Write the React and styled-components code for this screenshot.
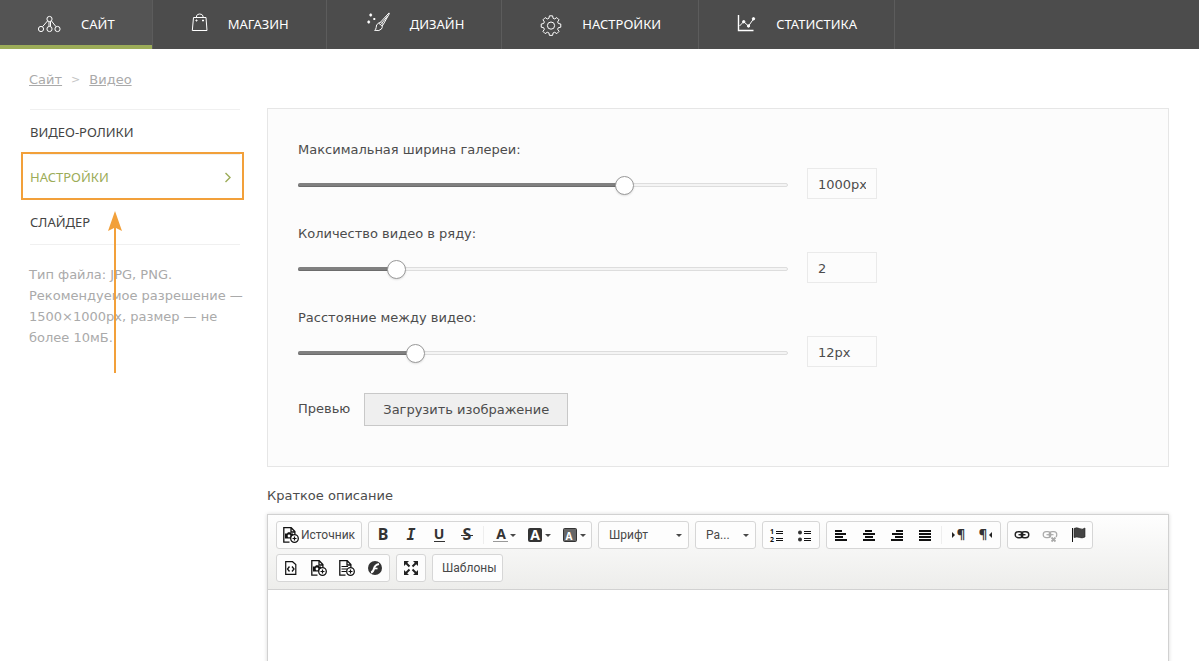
import React, { useState } from 'react'
import styled, { createGlobalStyle } from 'styled-components'

const theme = {
  navFont: "'Noto Sans', 'Open Sans', sans-serif",
  bodyFont: "'DejaVu Sans', Verdana, sans-serif",
  editorFont: "Roboto, 'Liberation Sans', sans-serif",
  green: '#9cac58',
  orange: '#f2a03a',
  text: '#4c4c4c',
  muted: '#aaaaaa',
}

const GlobalStyle = createGlobalStyle`
  * {
    box-sizing: border-box;
  }
  body {
    margin: 0;
    background: #fff;
    color: ${theme.text};
    font: 13px/20px ${theme.bodyFont};
  }
  input, button, select, textarea {
    font: inherit;
    color: inherit;
    margin: 0;
  }
  svg {
    overflow: visible;
  }
`

// outline of a gear with eight teeth around cx, cy
const gearPath = (cx, cy, inner, outer) => {
  const steps = [
    [-0.28, inner],
    [-0.16, outer],
    [0.16, outer],
    [0.28, inner],
  ]
  const points = []
  for (let i = 0; i < 8; i++) {
    steps.forEach(([offset, r]) => {
      const a = (i * Math.PI) / 4 + offset
      const x = cx + r * Math.sin(a)
      const y = cy - r * Math.cos(a)
      points.push(`${x.toFixed(2)} ${y.toFixed(2)}`)
    })
  }
  return `M${points.join('L')}Z`
}

const navItems = [
  {
    title: 'САЙТ',
    width: 23,
    active: true,
    icon: (
      <>
        <circle cx='11.5' cy='7' r='2.6' />
        <circle cx='3' cy='17' r='2.6' />
        <circle cx='11.5' cy='17' r='2.6' />
        <circle cx='19.5' cy='17' r='2.6' />
        <path d='M9.5 9L4.5 14.7M13.5 9L18 14.7M11 9.6V14.4M12.5 9.6V14.4' />
      </>
    ),
  },
  {
    title: 'МАГАЗИН',
    width: 17,
    icon: (
      <>
        <path d='M2.5 5.5H15L16 18.5H1.3Z' />
        <path d='M5.5 5.5V4Q6 2 8.7 2T12 4V5.5' />
        <path d='M5 8h1v1H5zM11.5 8h1v1h-1z' />
      </>
    ),
  },
  {
    title: 'ДИЗАЙН',
    width: 25,
    icon: (
      <>
        <path d='M24 .9L15.4 10.3L18.2 12.6L24.4 1.6Z' />
        <path d='M15.4 10.3L13.6 11.2Q10.8 12.4 11.2 15.4Q11 17.6 9.6 18.3Q14.6 19.4 16.4 17Q17.6 15.4 17.2 13.9L18.2 12.6M13.6 11.2L17.2 13.9M22.5 4L17 11' />
        <path d='M5.7 1.6V4.4M4.3 3H7.1M3.7 8.6V11.4M2.3 10H5.1M9.3 6V8M8.3 7H10.3' strokeWidth='1.5' />
      </>
    ),
  },
  {
    title: 'НАСТРОЙКИ',
    width: 22,
    icon: (
      <>
        <path d={gearPath(11, 13.6, 7.6, 9.9)} strokeLinejoin='round' />
        <circle cx='11' cy='13.6' r='3.6' />
      </>
    ),
  },
  {
    title: 'СТАТИСТИКА',
    width: 19,
    icon: (
      <>
        <path d='M1.5 3V18.5H16.5' strokeWidth='1.4' />
        <path d='M2.5 14L6.7 9.7L11.5 14L16.7 6.7' />
        <circle cx='6.7' cy='9.7' r='1.2' fill='#fff' />
        <circle cx='11.5' cy='14' r='1.2' fill='#fff' />
        <circle cx='16.5' cy='6.8' r='1.2' fill='#fff' />
      </>
    ),
  },
]

const Letter = ({ children, ...props }) => (
  <text
    textAnchor='middle'
    fontFamily="'Noto Sans', sans-serif"
    fontWeight='700'
    fontSize='14'
    fill='#333'
    {...props}
  >
    {children}
  </text>
)

const Page = () => (
  <path
    d='M6.5 15.2H.8V.7H8.2L11.9 4.6V7M8 1V5H11.8'
    fill='none'
    stroke='#111'
    strokeWidth='1.3'
  />
)

const PlusBadge = () => (
  <>
    <circle cx='11.5' cy='11.5' r='3.8' fill='#fff' stroke='#111' strokeWidth='1.3' />
    <path d='M9.5 11.5H13.5M11.5 9.5V13.5' stroke='#111' strokeWidth='1.2' />
  </>
)

const lines = (rows) => (
  <path
    d={rows.map(([x, y, w]) => `M${x} ${y}h${w}v2h-${w}z`).join('')}
    fill='#111'
  />
)

const Chain = () => (
  <>
    <rect x='1.2' y='4.7' width='7.6' height='6' rx='3' />
    <rect x='7.2' y='4.7' width='7.6' height='6' rx='3' />
    <path d='M4.5 7.7H11.5' />
  </>
)

const icons = {
  source: (
    <>
      <Page />
      <path d='M2 6.5H4L5 5.3H7.5L8.5 6.5H10V11.5H2Z' fill='#111' />
      <circle cx='6' cy='9' r='1.4' fill='#fff' />
      <PlusBadge />
    </>
  ),
  bold: <Letter x='8' y='13' fontSize='16'>B</Letter>,
  italic: (
    <Letter x='8' y='13' fontSize='15' fontFamily="'DejaVu Sans Mono', monospace" fontStyle='italic'>
      I
    </Letter>
  ),
  underline: (
    <>
      <Letter x='8' y='12'>U</Letter>
      <path d='M3 14h11v1H3z' fill='#333' />
    </>
  ),
  strike: (
    <>
      <Letter x='8' y='13' fontSize='16'>S</Letter>
      <path d='M2 8h12v1H2z' fill='#333' />
    </>
  ),
  color: (
    <>
      <Letter x='9' y='12'>A</Letter>
      <path d='M1 14h15v1H1z' fill='#999' />
    </>
  ),
  background: (
    <>
      <rect x='1' y='1' width='14' height='14' rx='2' fill='#333' />
      <Letter x='8' y='13' fill='#fff'>A</Letter>
    </>
  ),
  shade: (
    <>
      <rect x='1.5' y='1.5' width='13' height='13' rx='1' fill='#666' stroke='#333' />
      <Letter x='7' y='13' fontSize='10' fill='#fff'>A</Letter>
    </>
  ),
  numbered: (
    <>
      <Letter x='3' y='7' fontSize='7' fill='#111'>1</Letter>
      <Letter x='3' y='15' fontSize='7' fill='#111'>2</Letter>
      <path d='M7 4h7v1H7zM7 6h7v1H7zM7 11h7v1H7zM7 13h7v1H7z' fill='#111' />
    </>
  ),
  bulleted: (
    <>
      <circle cx='3' cy='5.5' r='2' fill='#333' />
      <circle cx='3' cy='12.5' r='2' fill='#333' />
      <path d='M7 4h7v1H7zM7 6h7v1H7zM7 11h7v1H7zM7 13h7v1H7z' fill='#111' />
    </>
  ),
  left: lines([[2, 3, 7], [2, 6, 11], [2, 9, 8], [2, 12, 12]]),
  center: lines([[4, 3, 7], [2, 6, 12], [4, 9, 8], [2, 12, 12]]),
  right: lines([[7, 3, 7], [3, 6, 11], [6, 9, 8], [2, 12, 12]]),
  justify: lines([[2, 3, 12], [2, 6, 12], [2, 9, 12], [2, 12, 12]]),
  ltr: (
    <>
      <path d='M2 5L5 8L2 11Z' fill='#222' />
      <Letter x='11' y='12' fontSize='13'>¶</Letter>
    </>
  ),
  rtl: (
    <>
      <path d='M14 5L11 8L14 11Z' fill='#222' />
      <Letter x='5' y='12' fontSize='13'>¶</Letter>
    </>
  ),
  link: (
    <g fill='none' stroke='#222' strokeWidth='1.4'>
      <Chain />
    </g>
  ),
  unlink: (
    <>
      <g fill='none' stroke='#aaa' strokeWidth='1.2'>
        <Chain />
      </g>
      <path d='M9 10L14 15M14 10L9 15' stroke='#fff' strokeWidth='4' />
      <path d='M9.5 10.5L13.5 14.5M13.5 10.5L9.5 14.5' stroke='#aaa' strokeWidth='1.8' />
    </>
  ),
  flag: (
    <>
      <path d='M2 1h1v14H2z' fill='#111' />
      <path d='M4 1.5Q6.5 0 9.5 1.5T15 1V10Q12 11.5 9.5 10.5T4 10.5Z' fill='#444' stroke='#222' strokeWidth='.6' />
    </>
  ),
  code: (
    <>
      <path d='M2.7 1.7H9.5L12.8 4.5V14.3H2.7Z' fill='none' stroke='#111' strokeWidth='1.2' />
      <path d='M6.5 6.5L4.5 9L6.5 11.5M9 6.5L11 9L9 11.5' fill='none' stroke='#111' strokeWidth='1.3' />
    </>
  ),
  text: (
    <>
      <Page />
      <path d='M2.5 6.5H9M2.5 9H8M2.5 11.5H7' stroke='#111' strokeWidth='1.2' />
      <PlusBadge />
    </>
  ),
  flash: (
    <>
      <circle cx='8' cy='8' r='7' fill='#333' />
      <path d='M4 12.5Q6.3 12 7 8.5T12 4' fill='none' stroke='#fff' strokeWidth='2' />
      <path d='M7 8.5H10.5' stroke='#fff' strokeWidth='1.6' />
    </>
  ),
  maximize: (
    <>
      <path d='M1 1H6L1 6ZM15 1V6L10 1ZM1 15V10L6 15ZM15 15H10L15 10Z' fill='#222' />
      <path d='M2 2L6.5 6.5M14 2L9.5 6.5M2 14L6.5 9.5M14 14L9.5 9.5' stroke='#222' strokeWidth='2' />
    </>
  ),
}

const Tool = ({ name, label, menu, disabled, children }) => (
  <ToolButton type='button' aria-label={label} disabled={disabled}>
    {name && (
      <svg width='16' height='16' viewBox='0 0 16 16' aria-hidden='true'>
        {icons[name]}
      </svg>
    )}
    {children}
    {menu && <Caret />}
  </ToolButton>
)

const SliderField = ({ id, label, min, max, start, unit }) => {
  const [value, setValue] = useState(start)
  const percent = ((value - min) / (max - min)) * 100
  return (
    <Field>
      <label htmlFor={id}>{label}</label>
      <div className='row'>
        <Slider>
          <div className='track'>
            <div className='fill' style={{ width: `${percent}%` }} />
          </div>
          <input
            id={id}
            type='range'
            min={min}
            max={max}
            value={value}
            onChange={(e) => setValue(Number(e.target.value))}
          />
        </Slider>
        <ValueInput aria-label={label} value={`${value}${unit}`} readOnly />
      </div>
    </Field>
  )
}

const App = () => {
  return (
    <>
      <GlobalStyle />
      <Nav>
        {navItems.map(({ title, width, active, icon }) => (
          <NavLink href='#' key={title} $active={active}>
            <svg width={width} height='24' viewBox={`0 0 ${width} 24`} aria-hidden='true'>
              {icon}
            </svg>
            {title}
          </NavLink>
        ))}
      </Nav>
      <Breadcrumbs>
        <a href='#'>Сайт</a>
        <span>&gt;</span>
        <a href='#'>Видео</a>
      </Breadcrumbs>
      <Content>
        <Sidebar>
          <ul>
            <li>
              <a href='#'>ВИДЕО-РОЛИКИ</a>
            </li>
            <li>
              <a href='#' className='active'>
                НАСТРОЙКИ
                <svg width='8' height='12' viewBox='0 0 8 12' aria-hidden='true'>
                  <path d='M1.5 2L6 6.5L1.5 11' />
                </svg>
              </a>
              <Highlight />
              <Arrow width='14' height='162' viewBox='0 0 14 162' aria-hidden='true'>
                <path d='M7 0L14 20L8 17V162H6V17L0 20Z' />
              </Arrow>
            </li>
            <li>
              <a href='#'>СЛАЙДЕР</a>
            </li>
          </ul>
          <p>
            Тип файла: JPG, PNG. Рекомендуемое разрешение — 1500×1000px, размер
            — не более 10мБ.
          </p>
        </Sidebar>
        <Main>
          <Panel>
            <SliderField id='width' label='Максимальная ширина галереи:' min={0} max={1500} start={1000} unit='px' />
            <SliderField id='count' label='Количество видео в ряду:' min={1} max={6} start={2} unit='' />
            <SliderField id='space' label='Расстояние между видео:' min={0} max={50} start={12} unit='px' />
            <Preview>
              <span id='preview'>Превью</span>
              <button type='button' aria-describedby='preview'>
                Загрузить изображение
              </button>
            </Preview>
          </Panel>
          <EditorLabel htmlFor='description'>Краткое описание</EditorLabel>
          <Editor>
            <Toolbar>
              <ToolRow>
                <Group>
                  <Tool name='source'>Источник</Tool>
                </Group>
                <Group>
                  <Tool name='bold' label='Полужирный' />
                  <Tool name='italic' label='Курсив' />
                  <Tool name='underline' label='Подчеркнутый' />
                  <Tool name='strike' label='Зачеркнутый' />
                  <Separator />
                  <Tool name='color' label='Цвет текста' menu />
                  <Tool name='background' label='Цвет фона' menu />
                  <Tool name='shade' label='Цвет блока' menu />
                </Group>
                <Group>
                  <Combo $width={89}>
                    <select aria-label='Шрифт'>
                      <option>Шрифт</option>
                    </select>
                    <Caret />
                  </Combo>
                </Group>
                <Group>
                  <Combo $width={59}>
                    <select aria-label='Размер'>
                      <option>Ра...</option>
                    </select>
                    <Caret />
                  </Combo>
                </Group>
                <Group>
                  <Tool name='numbered' label='Нумерованный список' />
                  <Tool name='bulleted' label='Маркированный список' />
                </Group>
                <Group>
                  <Tool name='left' label='По левому краю' />
                  <Tool name='center' label='По центру' />
                  <Tool name='right' label='По правому краю' />
                  <Tool name='justify' label='По ширине' />
                  <Separator />
                  <Tool name='ltr' label='Слева направо' />
                  <Tool name='rtl' label='Справа налево' />
                </Group>
                <Group>
                  <Tool name='link' label='Ссылка' />
                  <Tool name='unlink' label='Убрать ссылку' disabled />
                  <Tool name='flag' label='Якорь' />
                </Group>
              </ToolRow>
              <ToolRow>
                <Group>
                  <Tool name='code' label='Код' />
                  <Tool name='source' label='Добавить изображение' />
                  <Tool name='text' label='Добавить текст' />
                  <Tool name='flash' label='Flash' />
                </Group>
                <Group>
                  <Tool name='maximize' label='Развернуть' />
                </Group>
                <Group>
                  <TextButton type='button'>Шаблоны</TextButton>
                </Group>
              </ToolRow>
            </Toolbar>
            <textarea id='description' />
          </Editor>
        </Main>
      </Content>
    </>
  )
}

const Nav = styled.nav`
  display: flex;
  height: 49px;
  background: #4c4c4c;
`
const NavLink = styled.a`
  display: flex;
  align-items: center;
  gap: 20px;
  padding: 0 37px 2px 38px;
  border-right: 1px solid #5c5c5c;
  color: #fff;
  font-family: ${theme.navFont};
  text-decoration: none;
  background: ${({ $active }) => ($active ? '#545454' : 'none')};
  box-shadow: ${({ $active }) =>
    $active ? `inset 0 -4px ${theme.green}` : 'none'};
  svg {
    fill: none;
    stroke: #fff;
  }
`
const Breadcrumbs = styled.div`
  display: flex;
  gap: 9px;
  padding: 21px 29px 18px;
  color: ${theme.muted};
  a {
    color: inherit;
  }
  span {
    font-size: 11px;
    color: #c4c4c4;
  }
`
const Content = styled.div`
  display: flex;
  gap: 23px;
  padding: 0 30px 0 29px;
`
const Sidebar = styled.aside`
  flex: 0 0 215px;
  ul {
    list-style: none;
    margin: 1px 4px 0 1px;
    padding: 0;
    border-bottom: 1px solid #f0f0f0;
  }
  li {
    position: relative;
    border-top: 1px solid #f0f0f0;
  }
  li a {
    display: flex;
    align-items: center;
    justify-content: space-between;
    height: 44px;
    padding-right: 8px;
    color: #444;
    font-family: ${theme.navFont};
    text-decoration: none;
  }
  li a.active {
    color: ${theme.green};
  }
  li a svg {
    fill: none;
    stroke: ${theme.green};
    stroke-width: 1.4;
  }
  p {
    margin: 19px 0 0;
    line-height: 21px;
    color: ${theme.muted};
  }
`
const Highlight = styled.div`
  position: absolute;
  inset: -3px -4px -1px -9px;
  border: 2px solid ${theme.orange};
  pointer-events: none;
  z-index: 1;
`
const Arrow = styled.svg`
  position: absolute;
  top: 56px;
  left: 78px;
  fill: ${theme.orange};
  pointer-events: none;
  z-index: 1;
`
const Main = styled.main`
  flex: 1;
  min-width: 0;
`
const Panel = styled.section`
  padding: 30px 30px 40px;
  border: 1px solid #e6e6e6;
  background: #fcfcfc;
`
const Field = styled.div`
  margin-bottom: 24px;
  label {
    display: block;
    margin-bottom: 7px;
    line-height: 22px;
  }
  .row {
    display: flex;
    align-items: center;
    gap: 19px;
  }
`
const Slider = styled.div`
  display: grid;
  align-items: center;
  flex: 0 1 490px;
  padding-top: 3px;
  .track,
  input {
    grid-area: 1 / 1;
  }
  .track {
    height: 4px;
    border: 1px solid #ddd;
    border-radius: 2px;
    background: #f4f4f4;
  }
  .fill {
    height: 4px;
    margin: -1px;
    border-radius: 2px;
    background: #808080;
    box-shadow: inset 0 -1px #6c6c6c;
  }
  input {
    appearance: none;
    height: 19px;
    margin: 0 -9px;
    background: none;
  }
  input::-webkit-slider-thumb {
    appearance: none;
    width: 19px;
    height: 19px;
    border: 1px solid #999;
    border-radius: 50%;
    background: #fff;
    box-shadow: 0 1px 2px rgb(0 0 0 / 12%);
  }
`
const ValueInput = styled.input`
  width: 70px;
  height: 31px;
  padding: 1px 10px 0;
  border: 1px solid #eaeaea;
  background: #fcfcfc;
`
const Preview = styled.div`
  display: flex;
  align-items: center;
  gap: 14px;
  margin-top: 26px;
  span {
    padding-bottom: 2px;
  }
  button {
    height: 33px;
    padding: 1px 18px 0;
    border: 1px solid #c8c8c8;
    background: #efefef;
  }
`
const EditorLabel = styled.label`
  display: block;
  margin: 19px 0 8px;
`
const Editor = styled.div`
  border: 1px solid #d1d1d1;
  box-shadow: 0 0 4px rgb(0 0 0 / 15%);
  textarea {
    display: block;
    width: 100%;
    height: 200px;
    padding: 10px;
    border: 0;
    outline: 0;
    resize: none;
  }
`
const Toolbar = styled.div`
  display: grid;
  gap: 5px;
  padding: 6px 8px 7px;
  border-bottom: 1px solid #d1d1d1;
  background: linear-gradient(#fefefe, #ededeb);
  font-family: ${theme.editorFont};
  font-size: 12px;
  color: #484848;
`
const ToolRow = styled.div`
  display: flex;
  flex-wrap: wrap;
  gap: 5px 6px;
`
const Group = styled.div`
  display: flex;
  height: 28px;
  border: 1px solid #d6d6d6;
  border-radius: 3px;
  background: #fdfdfd;
`
const ToolButton = styled.button`
  display: flex;
  align-items: center;
  gap: 2px;
  padding: 0 6px;
  border: 0;
  background: none;
`
const TextButton = styled(ToolButton)`
  padding: 0 6px 0 9px;
`
const Caret = styled.i`
  border: 3px solid transparent;
  border-top-color: #484848;
  border-bottom: 0;
  margin-right: -1px;
`
const Separator = styled.span`
  width: 1px;
  height: 18px;
  margin: 4px 2px;
  background: #eee;
`
const Combo = styled.span`
  display: flex;
  align-items: center;
  width: ${({ $width }) => $width}px;
  padding: 0 7px 0 10px;
  select {
    flex: 1;
    min-width: 0;
    height: 26px;
    appearance: none;
    border: 0;
    background: none;
  }
`

export default App
